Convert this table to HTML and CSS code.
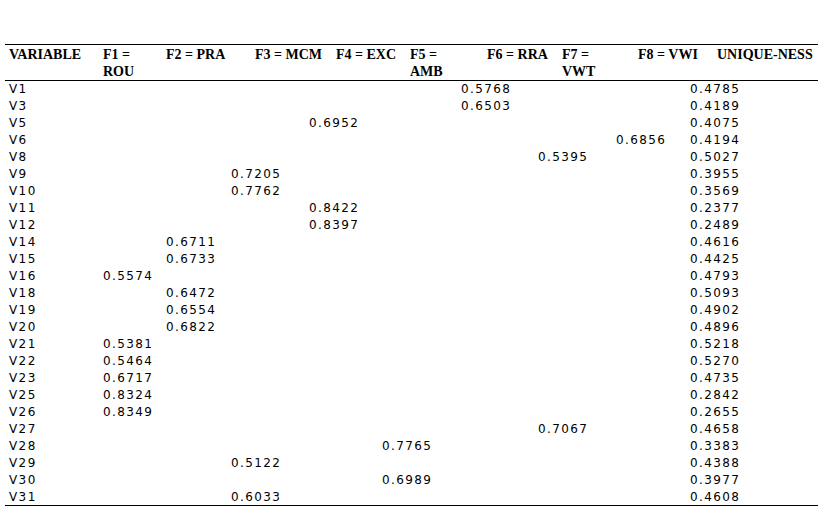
FILE: index.html
```html
<!DOCTYPE html>
<html lang="en">
<head>
  <meta charset="UTF-8">
  <title>Factor Loadings</title>
  <link rel="stylesheet" href="styles.css">
</head>
<body>
  <div class="loadings">
    <!-- Header row -->
    <div class="head">
      <span>VARIABLE</span>
      <span>F1 =<br>ROU</span>
      <span>F2 = PRA</span>
      <span>F3 = MCM</span>
      <span>F4 = EXC</span>
      <span>F5 =<br>AMB</span>
      <span>F6 = RRA</span>
      <span>F7 =<br>VWT</span>
      <span>F8 = VWI</span>
      <span>UNIQUE-NESS</span>
    </div>

    <!-- Loadings -->
    <div class="rows">
      <div class="row"><span class="var">V1</span><span class="f6">0.5768</span><span class="uq">0.4785</span></div>
      <div class="row"><span class="var">V3</span><span class="f6">0.6503</span><span class="uq">0.4189</span></div>
      <div class="row"><span class="var">V5</span><span class="f4">0.6952</span><span class="uq">0.4075</span></div>
      <div class="row"><span class="var">V6</span><span class="f8">0.6856</span><span class="uq">0.4194</span></div>
      <div class="row"><span class="var">V8</span><span class="f7">0.5395</span><span class="uq">0.5027</span></div>
      <div class="row"><span class="var">V9</span><span class="f3">0.7205</span><span class="uq">0.3955</span></div>
      <div class="row"><span class="var">V10</span><span class="f3">0.7762</span><span class="uq">0.3569</span></div>
      <div class="row"><span class="var">V11</span><span class="f4">0.8422</span><span class="uq">0.2377</span></div>
      <div class="row"><span class="var">V12</span><span class="f4">0.8397</span><span class="uq">0.2489</span></div>
      <div class="row"><span class="var">V14</span><span class="f2">0.6711</span><span class="uq">0.4616</span></div>
      <div class="row"><span class="var">V15</span><span class="f2">0.6733</span><span class="uq">0.4425</span></div>
      <div class="row"><span class="var">V16</span><span class="f1">0.5574</span><span class="uq">0.4793</span></div>
      <div class="row"><span class="var">V18</span><span class="f2">0.6472</span><span class="uq">0.5093</span></div>
      <div class="row"><span class="var">V19</span><span class="f2">0.6554</span><span class="uq">0.4902</span></div>
      <div class="row"><span class="var">V20</span><span class="f2">0.6822</span><span class="uq">0.4896</span></div>
      <div class="row"><span class="var">V21</span><span class="f1">0.5381</span><span class="uq">0.5218</span></div>
      <div class="row"><span class="var">V22</span><span class="f1">0.5464</span><span class="uq">0.5270</span></div>
      <div class="row"><span class="var">V23</span><span class="f1">0.6717</span><span class="uq">0.4735</span></div>
      <div class="row"><span class="var">V25</span><span class="f1">0.8324</span><span class="uq">0.2842</span></div>
      <div class="row"><span class="var">V26</span><span class="f1">0.8349</span><span class="uq">0.2655</span></div>
      <div class="row"><span class="var">V27</span><span class="f7">0.7067</span><span class="uq">0.4658</span></div>
      <div class="row"><span class="var">V28</span><span class="f5">0.7765</span><span class="uq">0.3383</span></div>
      <div class="row"><span class="var">V29</span><span class="f3">0.5122</span><span class="uq">0.4388</span></div>
      <div class="row"><span class="var">V30</span><span class="f5">0.6989</span><span class="uq">0.3977</span></div>
      <div class="row"><span class="var">V31</span><span class="f3">0.6033</span><span class="uq">0.4608</span></div>
    </div>
  </div>
</body>
</html>
```

FILE: styles.css
```css
/* General */
body {
  background-color: #fff;
  color: #000;
  margin: 0;
}

.loadings {
  margin: 44px 0 0 5px;
  width: 813px;
  border-top: 1px solid #000;
  border-bottom: 1px solid #000;
}

/* Header row */
.head {
  display: grid;
  grid-template-columns: 94px 63px 89px 81px 74px 77px 75px 76px 79px 1fr;
  padding: 1px 0 0 4px;
  border-bottom: 1px solid #000;
  font-family: 'Liberation Serif', 'Times New Roman', serif;
  font-weight: bold;
  font-size: 14px;
  line-height: 17px;
  height: 34px;
}

/* Body rows */
.row {
  display: grid;
  grid-template-columns: 94px 63px 65px 78px 73px 79px 77px 78px 74px 1fr;
  padding-left: 4px;
  font-family: 'DejaVu Sans', Verdana, sans-serif;
  font-size: 12px;
  letter-spacing: 1.4px;
  line-height: 17px;
  height: 17px;
}

.row:last-child {
  height: 16px;
}

.var { grid-column: 1; }
.f1 { grid-column: 2; }
.f2 { grid-column: 3; }
.f3 { grid-column: 4; }
.f4 { grid-column: 5; }
.f5 { grid-column: 6; }
.f6 { grid-column: 7; }
.f7 { grid-column: 8; }
.f8 { grid-column: 9; }
.uq { grid-column: 10; }
```
